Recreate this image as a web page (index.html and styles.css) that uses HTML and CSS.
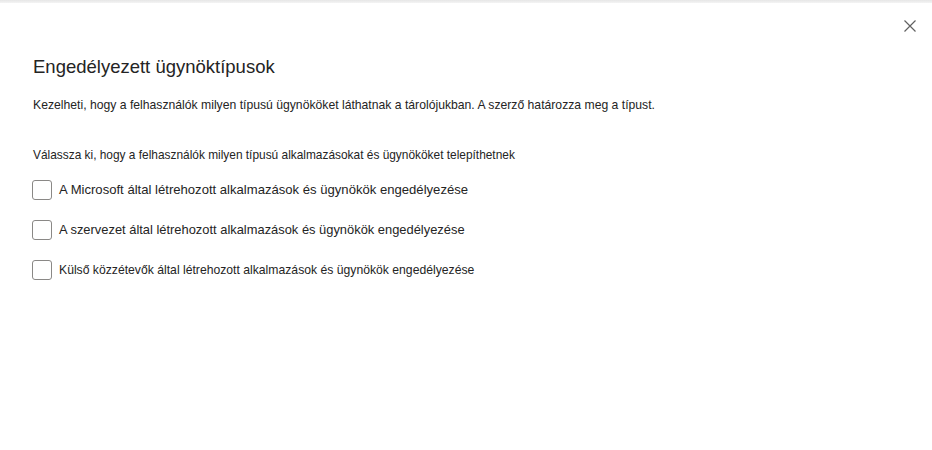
FILE: index.html
```html
<!DOCTYPE html>
<html lang="hu">
<head>
<meta charset="utf-8">
<link rel="stylesheet" href="styles.css">
</head>
<body>
<div class="topbar"></div>
<div class="panel">
  <button class="close" aria-label="Bezárás">
    <svg width="14" height="14" viewBox="0 0 14 14"><path d="M1.5 1.5 L12.5 12.5 M12.5 1.5 L1.5 12.5" stroke="#616161" stroke-width="1.2" fill="none"/></svg>
  </button>
  <h1 class="title">Engedélyezett ügynöktípusok</h1>
  <p class="desc">Kezelheti, hogy a felhasználók milyen típusú ügynököket láthatnak a tárolójukban. A szerző határozza meg a típust.</p>
  <p class="label">Válassza ki, hogy a felhasználók milyen típusú alkalmazásokat és ügynököket telepíthetnek</p>
  <div class="options">
    <label class="option"><span class="box"></span><span class="otext o1">A Microsoft által létrehozott alkalmazások és ügynökök engedélyezése</span></label>
    <label class="option"><span class="box"></span><span class="otext o2">A szervezet által létrehozott alkalmazások és ügynökök engedélyezése</span></label>
    <label class="option"><span class="box"></span><span class="otext o3">Külső közzétevők által létrehozott alkalmazások és ügynökök engedélyezése</span></label>
  </div>
</div>
</body>
</html>
```

FILE: styles.css
```css
html, body {
  margin: 0;
  padding: 0;
  background: #ffffff;
  font-family: "Liberation Sans", Arial, sans-serif;
  color: #242424;
}
.topbar {
  height: 3px;
  background: linear-gradient(#e6e6e6, #f4f4f4);
}
.panel {
  position: relative;
  padding: 50px 33px 0 33px;
}
.close {
  position: absolute;
  top: 13px;
  right: 12px;
  width: 20px;
  height: 20px;
  padding: 0;
  border: none;
  background: transparent;
  display: flex;
  align-items: center;
  justify-content: center;
}
.title {
  margin: 0;
  font-size: 18.5px;
  font-weight: 400;
  line-height: 28px;
}
.desc {
  margin: 15px 0 0 0;
  font-size: 12.2px;
  line-height: 18px;
}
.label {
  margin: 32px 0 0 0;
  font-size: 11.9px;
  line-height: 18px;
}
.options {
  margin-top: 16px;
  display: flex;
  flex-direction: column;
  gap: 20px;
}
.option {
  display: flex;
  align-items: center;
  gap: 7px;
  margin-left: -1px;
}
.box {
  width: 18px;
  height: 18px;
  border: 1px solid #8a8886;
  border-radius: 3px;
  flex: none;
}
.otext {
  font-size: 12.5px;
  line-height: 20px;
}
.otext.o1 { font-size: 13.1px; }
.otext.o2 { font-size: 12.9px; }
.otext.o3 { font-size: 12.2px; }
```
